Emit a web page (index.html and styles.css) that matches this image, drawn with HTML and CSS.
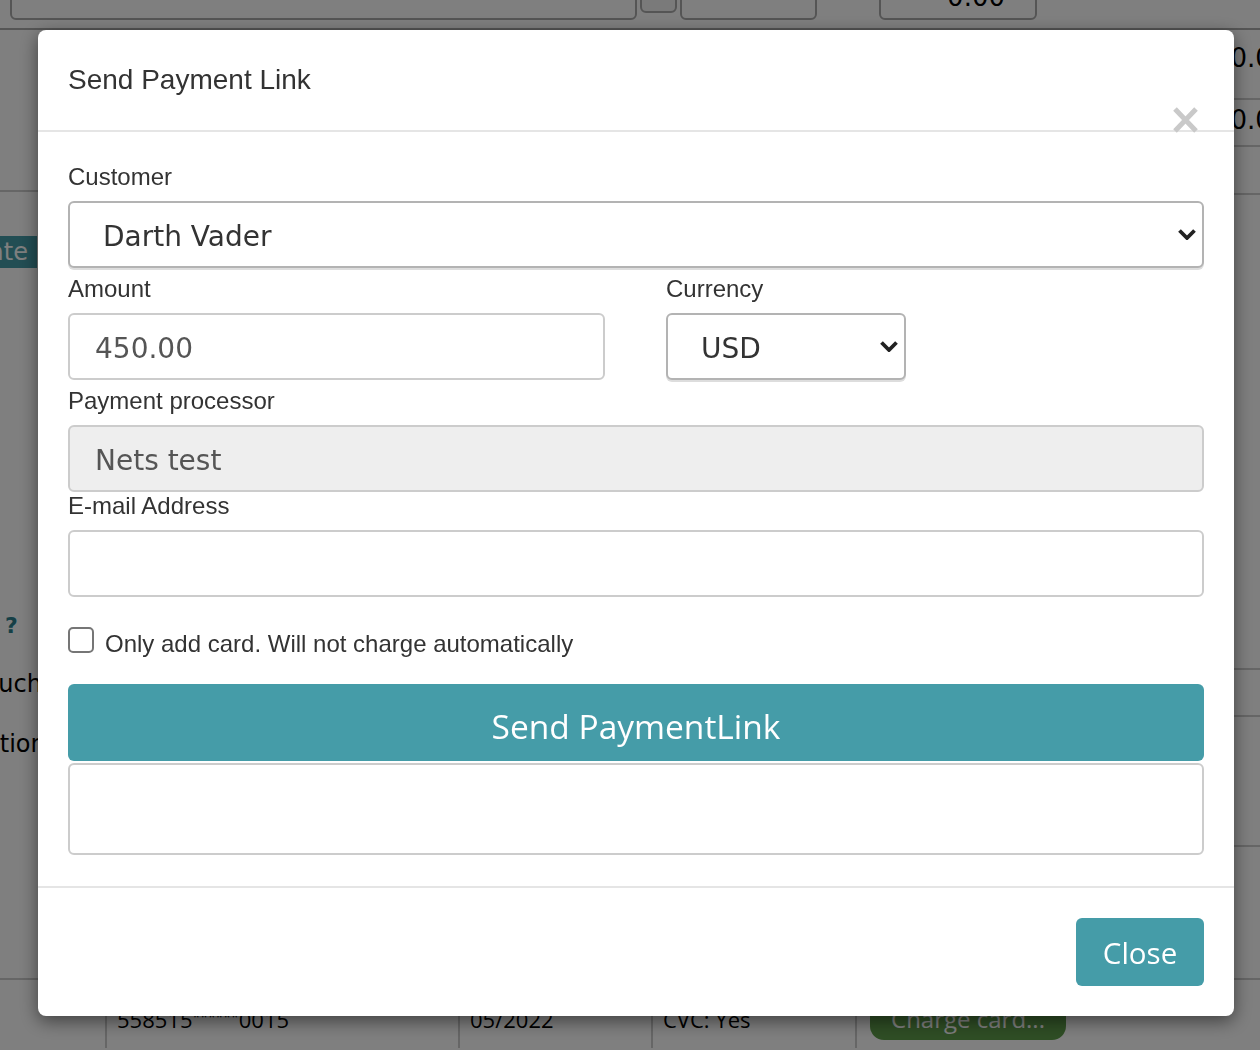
FILE: index.html
```html
<!DOCTYPE html>
<html>
<head>
  <meta charset="utf-8">
  <title>Card payments</title>
  <link rel="stylesheet" href="styles.css">
</head>
<body>
  <div class="page">
    <div class="toolbar">
      <span class="tb-field tb-wide"></span>
      <span class="tb-btn"></span>
      <span class="tb-field tb-mid"></span>
      <span class="tb-field tb-sum">0.00</span>
    </div>

    <div class="layout">
      <aside class="side">
        <div class="side-top"></div>
        <button class="side-btn">Update</button>
        <div class="side-help">?</div>
        <div class="side-text vouchers">Vouchers</div>
        <div class="side-text descr">Description</div>
      </aside>
      <section class="center"></section>
      <aside class="totals">
        <div class="tot-row tall">10.00</div>
        <div class="tot-row">10.00</div>
        <div class="tot-row short"></div>
        <div class="tot-row gap"></div>
        <div class="tot-row"></div>
        <div class="tot-row long"></div>
      </aside>
    </div>

    <div class="cards">
      <div class="card-cell c1"></div>
      <div class="card-cell c2">558515<span class="mask">******</span>0015</div>
      <div class="card-cell c3">05/2022</div>
      <div class="card-cell c4">CVC: Yes</div>
      <div class="card-cell c5"><span class="charge">Charge card...</span></div>
    </div>
  </div>

  <div class="modal-backdrop"></div>

  <div class="modal">
    <div class="modal-header">
      <h4 class="modal-title">Send Payment Link</h4>
      <button class="close" aria-label="Close">
        <svg width="25" height="26" viewBox="0 0 25 26">
          <path d="M2 2 L23 24 M23 2 L2 24" stroke="#c9c9c9" stroke-width="5" fill="none"/>
        </svg>
      </button>
    </div>

    <div class="modal-body">
      <div class="form-group">
        <label class="control-label">Customer</label>
        <div class="select-wrap">
          <select class="form-control">
            <option>Darth Vader</option>
          </select>
          <svg class="chevron" width="18" height="11" viewBox="0 0 18 11">
            <polyline points="1.5,1.5 9,9 16.5,1.5" stroke="#222" stroke-width="3.8" fill="none"/>
          </svg>
        </div>
      </div>

      <div class="row">
        <div class="form-group">
          <label class="control-label">Amount</label>
          <input class="form-control" type="text" value="450.00">
        </div>
        <div class="form-group">
          <label class="control-label">Currency</label>
          <div class="select-wrap">
            <select class="form-control">
              <option>USD</option>
            </select>
            <svg class="chevron" width="18" height="11" viewBox="0 0 18 11">
              <polyline points="1.5,1.5 9,9 16.5,1.5" stroke="#222" stroke-width="3.8" fill="none"/>
            </svg>
          </div>
        </div>
      </div>

      <div class="form-group tight">
        <label class="control-label">Payment processor</label>
        <input class="form-control" type="text" value="Nets test" disabled>
      </div>

      <div class="form-group email">
        <label class="control-label">E-mail Address</label>
        <input class="form-control" type="email">
      </div>

      <label class="checkbox">
        <input type="checkbox">
        <span>Only add card. Will not charge automatically</span>
      </label>

      <button class="btn btn-send">Send PaymentLink</button>
      <div class="result"></div>
    </div>

    <div class="modal-footer">
      <button class="btn btn-close">Close</button>
    </div>
  </div>
</body>
</html>
```

FILE: styles.css
```css
* {
  box-sizing: border-box;
}

html, body {
  margin: 0;
  height: 100%;
  overflow: hidden;
}

body {
  font-family: "DejaVu Sans", Verdana, sans-serif;
  background: #fff;
  color: #000;
}

/* page behind the dialog */

.page {
  width: 1260px;
  height: 1050px;
  overflow: hidden;
}

.toolbar {
  display: flex;
  height: 30px;
  border-bottom: 2px solid #aaa;
  padding-left: 10px;
}

.tb-field,
.tb-btn {
  display: block;
  margin-top: -20px;
  height: 40px;
  border: 2px solid #aaa;
  border-radius: 6px;
}

.tb-wide { width: 627px; }

.tb-btn {
  width: 37px;
  height: 33px;
  margin-left: 3px;
  background: #f4f4f4;
}

.tb-mid {
  width: 137px;
  margin-left: 3px;
}

.tb-sum {
  width: 158px;
  margin-left: 62px;
  text-align: right;
  padding-right: 30px;
  font-size: 26px;
  line-height: 30px;
}

.layout {
  display: flex;
  height: 938px;
}

.side {
  width: 40px;
  overflow: hidden;
}

.side-top {
  height: 162px;
  border-bottom: 2px solid #ccc;
}

.side-btn {
  display: block;
  width: 37px;
  height: 32px;
  margin-top: 44px;
  padding: 0 9px 0 0;
  border: 0;
  background: #459ca8;
  color: #fff;
  font-family: "DejaVu Sans", sans-serif;
  font-size: 24px;
  direction: rtl;
  white-space: nowrap;
  overflow: hidden;
}

.side-help {
  margin-top: 343px;
  padding-left: 5px;
  color: #2a7f8c;
  font-weight: bold;
  font-size: 22px;
  line-height: 30px;
}

.side-text {
  white-space: nowrap;
  font-size: 24px;
  line-height: 30px;
}

.vouchers {
  margin-top: 28px;
  margin-left: -31px;
}

.descr {
  margin-top: 30px;
  margin-left: -91px;
}

.center {
  flex: 1;
}

.totals {
  width: 26px;
  overflow: hidden;
  padding-left: 2px;
}

.tot-row {
  height: 47px;
  border-bottom: 2px solid #ccc;
  font-size: 26px;
  line-height: 40px;
  margin-left: -22px;
  white-space: nowrap;
}

.tot-row.tall {
  height: 70px;
  line-height: 56px;
}

.tot-row.short { height: 48px; }
.tot-row.gap { height: 475px; }
.tot-row.long { height: 130px; }

.cards {
  display: flex;
  border-top: 2px solid #ccc;
  margin-top: 10px;
  height: 70px;
  font-family: "Open Sans", sans-serif;
  font-size: 22px;
}

.card-cell {
  border-right: 2px solid #ccc;
  padding: 24px 0 0 10px;
  white-space: nowrap;
}

.mask {
  font-size: 14px;
  vertical-align: 6px;
}

.c1 { width: 107px; }
.c2 { width: 353px; }
.c3 { width: 193px; }
.c4 { width: 204px; }
.c5 {
  width: 400px;
  border-right: 0;
  padding: 10px 0 0 13px;
}

.charge {
  display: inline-block;
  width: 196px;
  height: 50px;
  padding-top: 12px;
  border-radius: 14px;
  background: #5e9c4a;
  color: #fff;
  text-align: center;
  font-size: 24px;
}

/* dialog */

.modal-backdrop {
  position: fixed;
  top: 0;
  left: 0;
  right: 0;
  bottom: 0;
  background: rgba(0, 0, 0, 0.5);
}

.modal {
  position: fixed;
  top: 30px;
  left: 38px;
  width: 1196px;
  background: #fff;
  border-radius: 8px;
  box-shadow: 0 5px 18px rgba(0, 0, 0, 0.5);
  font-family: "Liberation Sans", Arial, sans-serif;
  color: #333;
}

.modal-header {
  position: relative;
  padding: 30px;
  border-bottom: 2px solid #e5e5e5;
}

.modal-title {
  margin: 0;
  font-size: 28px;
  line-height: 40px;
  font-weight: normal;
}

.close {
  position: absolute;
  top: 77px;
  right: 36px;
  width: 25px;
  height: 26px;
  padding: 0;
  border: 0;
  background: none;
}

.close svg {
  display: block;
}

.modal-body {
  padding: 28px 30px 31px;
}

.form-group {
  margin-bottom: 4px;
}

.form-group.tight {
  margin-bottom: 0;
}

.form-group.email {
  margin-top: -3px;
}

.control-label {
  display: block;
  font-size: 24px;
  line-height: 34px;
  margin-bottom: 7px;
}

.form-control {
  display: block;
  width: 100%;
  height: 67px;
  margin: 0;
  padding: 4px 25px 0;
  border: 2px solid #ccc;
  border-radius: 6px;
  background: #fff;
  font-family: "DejaVu Sans", Verdana, sans-serif;
  font-size: 28px;
  color: #555;
  outline: none;
}

.form-control[disabled] {
  background: #eee;
}

.select-wrap {
  position: relative;
}

.select-wrap select {
  -webkit-appearance: none;
  appearance: none;
  padding-left: 33px;
  color: #333;
  border-color: #b3b3b3;
  box-shadow: 0 2px 0 #ddd;
}

.chevron {
  position: absolute;
  right: 8px;
  top: 28px;
  pointer-events: none;
}

.row {
  display: grid;
  grid-template-columns: 537px 240px;
  column-gap: 61px;
  margin-bottom: 4px;
}

.row .form-group {
  margin-bottom: 0;
}

.checkbox {
  display: flex;
  align-items: flex-start;
  height: 34px;
  margin-top: 26px;
  font-size: 24px;
}

.checkbox input {
  -webkit-appearance: none;
  appearance: none;
  flex: none;
  width: 26px;
  height: 26px;
  margin: 4px 11px 0 0;
  border: 2px solid #767676;
  border-radius: 5px;
  background: #fff;
}

.checkbox span {
  margin-top: 4px;
  line-height: 34px;
}

.btn {
  font-family: "Open Sans", sans-serif;
  color: #fff;
  background: #459ca8;
  border: 0;
  border-radius: 6px;
  padding: 0;
}

.btn-send {
  display: block;
  width: 100%;
  height: 77px;
  margin-top: 27px;
  padding-top: 6px;
  font-size: 33.5px;
}

.result {
  height: 92px;
  margin-top: 2px;
  border: 2px solid #ccc;
  border-radius: 6px;
}

.modal-footer {
  display: flex;
  justify-content: flex-end;
  padding: 30px;
  border-top: 2px solid #e5e5e5;
}

.btn-close {
  width: 128px;
  height: 68px;
  font-size: 29.5px;
}
```
